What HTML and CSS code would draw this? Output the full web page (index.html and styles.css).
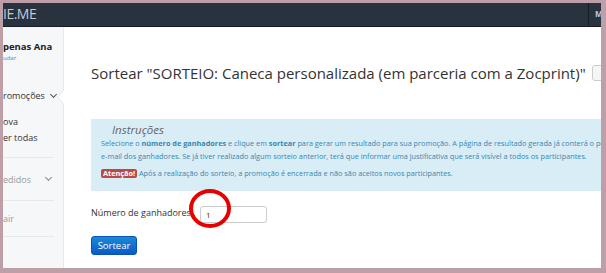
FILE: index.html
```
<!DOCTYPE html>
<html lang="pt">
<head>
    <meta charset="UTF-8">
    <title>Sortear</title>
    <link rel="stylesheet" href="styles.css">
</head>
<body>
    <div class="frame">
        <div class="topbar">
            <div class="brand">IE.ME</div>
            <div class="user">M</div>
        </div>
        <div class="page">
            <div class="sidebar">
                <div class="profile">
                    <div class="name">penas Ana</div>
                    <div class="change">udar</div>
                </div>
                <div class="menu-head">romoções <span class="chev"></span></div>
                <ul class="submenu">
                    <li>ova</li>
                    <li>er todas</li>
                </ul>
                <div class="menu-box muted">edidos <span class="chev"></span></div>
                <div class="menu-box muted">air</div>
                <span class="notch"></span>
            </div>
            <div class="main">
                <div class="title-row">
                    <h1 class="title">Sortear "SORTEIO: Caneca personalizada (em parceria com a Zocprint)"</h1>
                    <span class="back-btn"></span>
                </div>
                <div class="alert">
                    <h4>Instruções</h4>
                    <p>Selecione o <b>número de ganhadores</b> e clique em <b>sortear</b> para gerar um resultado para sua promoção. A página de resultado gerada já conterá o pe</p>
                    <p>e-mail dos ganhadores. Se já tiver realizado algum sorteio anterior, terá que informar uma justificativa que será visível a todos os participantes.</p>
                    <p class="warn"><span class="label">Atenção!</span> Após a realização do sorteio, a promoção é encerrada e não são aceitos novos participantes.</p>
                </div>
                <div class="field">
                    <label>Número de ganhadores</label>
                    <div class="input-wrap">
                        <input type="text" value="1">
                        <span class="circle"></span>
                    </div>
                </div>
                <button class="btn">Sortear</button>
            </div>
        </div>
    </div>
</body>
</html>
```

FILE: styles.css
```
* {
    padding: 0;
    margin: 0;
    list-style: none;
    box-sizing: border-box;
}
body {
    background-color: #bf9fa7;
    font-family: "Open Sans", "DejaVu Sans", sans-serif;
    color: #333;
}
.frame {
    width: 598px;
    height: 265px;
    margin: 3px 5px 5px 3px;
    background-color: #fff;
    overflow: hidden;
    display: flex;
    flex-direction: column;
}
.topbar {
    height: 24px;
    flex: none;
    background-color: #29333f;
    border-bottom: 1px solid #161c23;
    display: flex;
    justify-content: space-between;
}
.brand {
    color: #c3cad6;
    font-size: 14px;
    line-height: 22px;
    letter-spacing: -0.5px;
}
.user {
    width: 13px;
    border-left: 1px solid #161c23;
    color: #c3cad6;
    font-size: 8px;
    font-weight: bold;
    line-height: 22px;
    padding-left: 6px;
    overflow: hidden;
}
.page {
    flex: 1;
    display: flex;
}
.sidebar {
    width: 61px;
    flex: none;
    background-color: #f6f7f8;
    border-right: 1px solid #e6e8ea;
    position: relative;
    font-size: 9px;
}
.profile {
    padding-top: 14px;
    height: 50px;
}
.name {
    font-weight: bold;
    font-size: 9.5px;
    color: #222;
    line-height: 12px;
}
.change {
    font-size: 6px;
    color: #3a8dd0;
    line-height: 10px;
}
.menu-head {
    display: flex;
    align-items: center;
    gap: 3px;
    height: 37px;
    color: #333;
}
.chev {
    width: 5px;
    height: 5px;
    border-right: 1.5px solid #555;
    border-bottom: 1.5px solid #555;
    transform: rotate(45deg);
    margin: -3px 0 0 3px;
}
.submenu li {
    line-height: 16px;
    color: #333;
}
.submenu {
    padding-bottom: 11px;
    border-bottom: 1px solid #e6e8ea;
    margin-right: 9px;
}
.menu-box {
    height: 43px;
    margin-right: 9px;
    border-bottom: 1px solid #e6e8ea;
    display: flex;
    align-items: center;
    gap: 12px;
}
.menu-box + .menu-box {
    height: 36px;
}
.muted {
    color: #999;
}
.muted .chev {
    border-color: #888;
}
.notch {
    position: absolute;
    top: 62px;
    right: -1px;
    width: 0;
    height: 0;
    border-top: 8px solid transparent;
    border-bottom: 8px solid transparent;
    border-right: 7px solid #e2e6ea;
}
.notch::after {
    content: "";
    position: absolute;
    top: -7px;
    left: 1px;
    border-top: 7px solid transparent;
    border-bottom: 7px solid transparent;
    border-right: 6px solid #fff;
}
.main {
    flex: 1;
    padding: 36px 0 0 27px;
    overflow: hidden;
}
.title-row {
    display: flex;
    align-items: center;
    gap: 6px;
    white-space: nowrap;
    height: 20px;
}
.title {
    font-size: 15px;
    font-weight: normal;
    color: #333;
}
.back-btn {
    flex: none;
    width: 20px;
    height: 16px;
    border: 1px solid #ccc;
    border-radius: 3px;
    background-color: #f5f5f5;
}
.alert {
    margin-top: 36px;
    width: 560px;
    height: 72px;
    background-color: #d9edf7;
    padding: 4px 10px;
    color: #3a87ad;
    font-size: 7.3px;
}
.alert h4 {
    font-size: 11.5px;
    font-style: italic;
    font-weight: normal;
    color: #666;
    padding-left: 11px;
    line-height: 14px;
}
.alert p {
    line-height: 13px;
    white-space: nowrap;
}
.alert b {
    font-weight: bold;
}
.alert .warn {
    margin-top: 4px;
}
.label {
    background-color: #b94a48;
    color: #fff;
    padding: 0 2px;
    border-radius: 2px;
    font-weight: bold;
    display: inline-block;
    line-height: 9px;
}
.field {
    margin-top: 10px;
    display: flex;
    align-items: center;
    gap: 9px;
}
.field label {
    font-size: 9px;
    color: #333;
}
.input-wrap {
    position: relative;
}
.input-wrap input {
    width: 67px;
    height: 17px;
    border: 1px solid #ccc;
    border-radius: 3px;
    padding-left: 5px;
    font-family: "Open Sans", sans-serif;
    font-size: 8px;
    color: #333;
}
.circle {
    position: absolute;
    left: -11px;
    top: -12px;
    width: 42px;
    height: 39px;
    border: 4px solid #e60000;
    border-radius: 50%;
}
.btn {
    margin-top: 13px;
    width: 46px;
    height: 19px;
    border: 1px solid #0a52b4;
    border-radius: 3px;
    background: linear-gradient(#1a8ad6, #0a5ac8);
    color: #fff;
    font-family: "Open Sans", sans-serif;
    font-size: 9.5px;
}
```
